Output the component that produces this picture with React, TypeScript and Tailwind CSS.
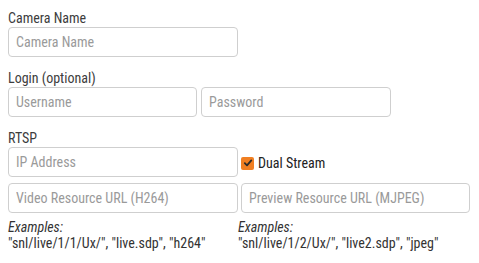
import React from "react";

const font = { fontFamily: "Roboto, 'Liberation Sans', sans-serif" };

const Field = ({ placeholder, className }: { placeholder: string; className: string }) => (
  <input
    type="text"
    placeholder={placeholder}
    className={`h-[30px] rounded-[4px] border border-[#cfcfcf] bg-white px-[7px] text-[14px] font-stretch-condensed text-[#333] placeholder:text-[#9a9a9a] outline-none ${className}`}
  />
);

const Label = ({ children }: { children: React.ReactNode }) => (
  <div className="text-[14px] font-stretch-condensed leading-[18px] text-[#3d3d3d]">{children}</div>
);

export default function App() {
  return (
    <div className="w-[479px] h-[263px] bg-white px-2 pt-[9px]" style={font}>
      <Label>Camera Name</Label>
      <Field placeholder="Camera Name" className="w-[230px]" />

      <div className="mt-3">
        <Label>Login (optional)</Label>
        <div className="flex gap-1">
          <Field placeholder="Username" className="w-[189px]" />
          <Field placeholder="Password" className="w-[190px]" />
        </div>
      </div>

      <div className="mt-3">
        <Label>RTSP</Label>
        <div className="flex items-center gap-[3px]">
          <Field placeholder="IP Address" className="w-[230px]" />
          <label className="flex items-center gap-[4px] pt-[2px]">
            <span className="flex h-[13px] w-[13px] items-center justify-center rounded-[2px] bg-[#f07f22]">
              <svg width="10" height="10" viewBox="0 0 10 10" fill="none" stroke="#2b2b2b" strokeWidth="1.8" strokeLinecap="round" strokeLinejoin="round">
                <path d="M1.8 5.2 L4 7.4 L8.3 2.4" />
              </svg>
            </span>
            <span className="text-[14px] font-stretch-condensed leading-[18px] text-[#222]">Dual Stream</span>
          </label>
        </div>
        <div className="mt-[6px] flex gap-[3px]">
          <Field placeholder="Video Resource URL (H264)" className="w-[230px]" />
          <Field placeholder="Preview Resource URL (MJPEG)" className="w-[229px]" />
        </div>
        <div className="mt-[6px] grid grid-cols-[230px_230px] text-[14px] font-stretch-condensed leading-[16px] text-[#333]">
          <div>
            <div className="italic">Examples:</div>
            <div>"snl/live/1/1/Ux/", "live.sdp", "h264"</div>
          </div>
          <div>
            <div className="italic">Examples:</div>
            <div>"snl/live/1/2/Ux/", "live2.sdp", "jpeg"</div>
          </div>
        </div>
      </div>
    </div>
  );
}
